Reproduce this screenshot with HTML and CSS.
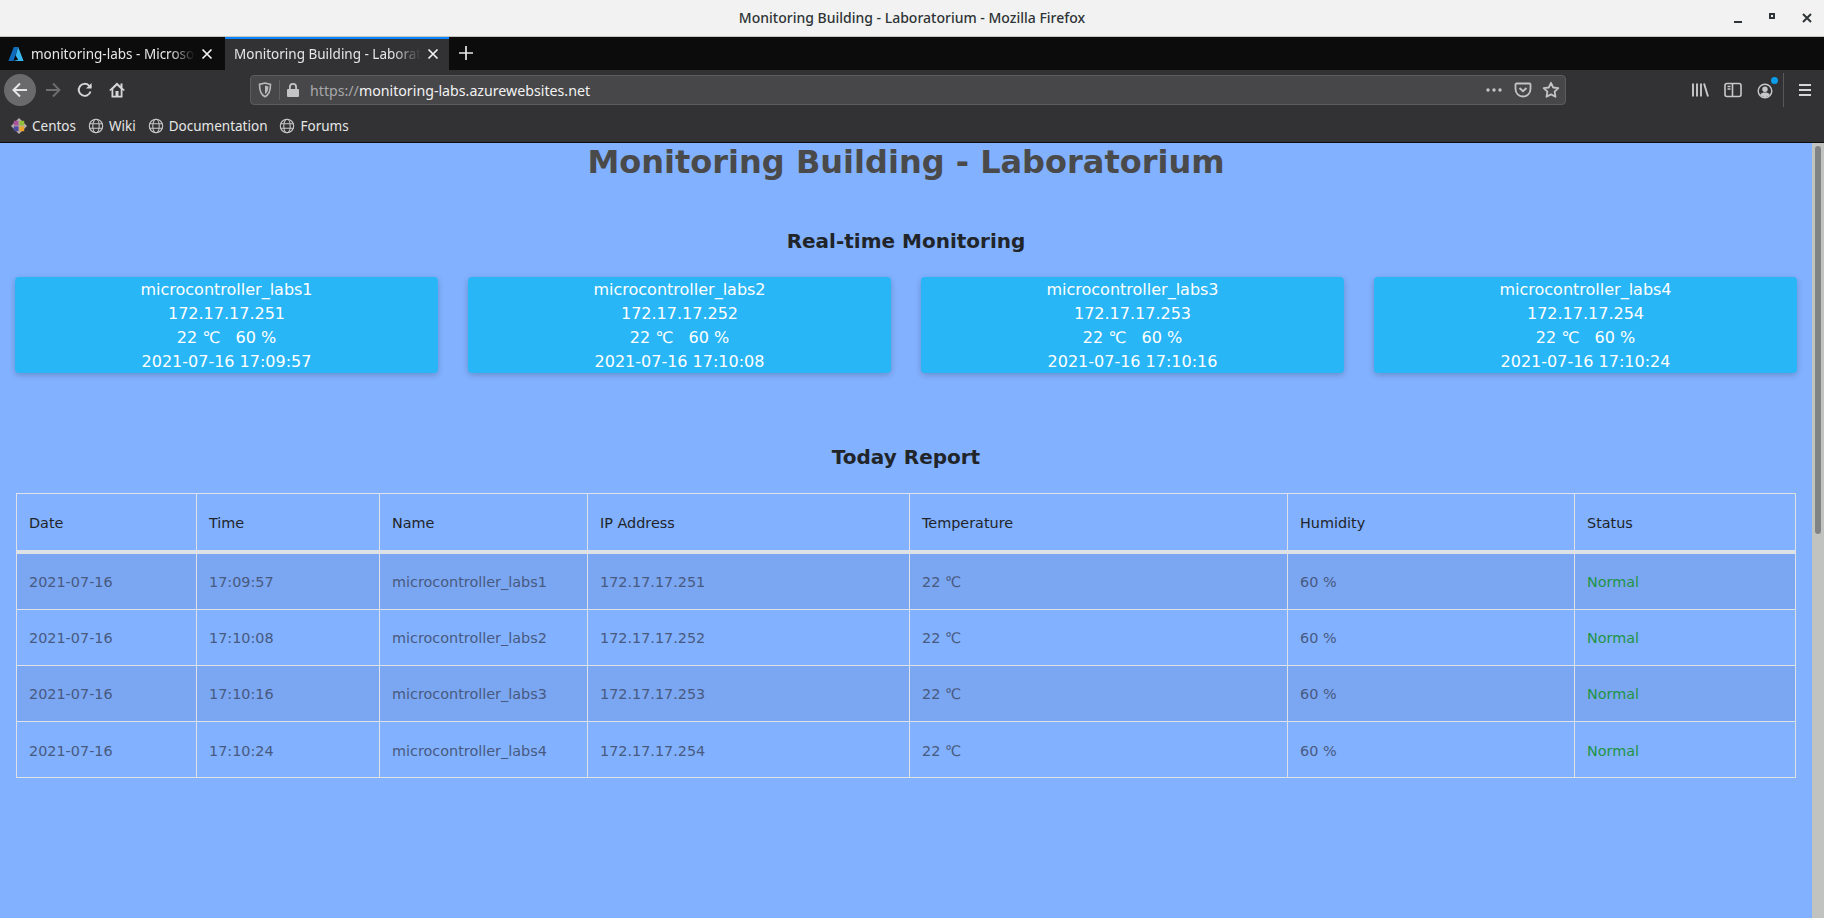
FILE: index.html
```html
<!DOCTYPE html>
<html lang="en">
<head>
  <meta charset="UTF-8">
  <title>Monitoring Building - Laboratorium</title>
  <link rel="stylesheet" href="styles.css">
</head>
<body>
<!-- Window title -->
<div class="titlebar">
  <div class="titlebar-text">Monitoring Building - Laboratorium - Mozilla Firefox</div>
  <div class="window-controls">
    <svg width="14" height="14" viewBox="0 0 14 14"><rect x="2" y="10" width="8" height="2" fill="#2e3436"/></svg>
    <svg width="14" height="14" viewBox="0 0 14 14"><path d="M3 2h6v6H3zM5 4v2h2V4z" fill="#2e3436" fill-rule="evenodd"/></svg>
    <svg width="14" height="14" viewBox="0 0 14 14"><path d="M3 3l8 8M11 3l-8 8" stroke="#2e3436" stroke-width="2" fill="none"/></svg>
  </div>
</div>

<!-- Tabs -->
<div class="tabstrip">
  <div class="tab">
    <svg class="tab-icon" width="16" height="16" viewBox="0 0 16 16">
      <path d="M5.800 1h4.400L5.400 15H0.400z" fill="#0f6cbd"/>
      <path d="M10.200 1l5.400 14H5.200l5-1.200L7.600 9.600 9 5z" fill="#38b6f0"/>
    </svg>
    <span class="tab-label">monitoring-labs - Microso</span>
    <svg class="tab-close" width="12" height="12" viewBox="0 0 12 12"><path d="M1.500 1.500l9 9M10.500 1.500l-9 9" stroke="#f2f2f2" stroke-width="1.700"/></svg>
  </div>
  <div class="tab tab-active">
    <span class="tab-label">Monitoring Building - Laborat</span>
    <svg class="tab-close" width="12" height="12" viewBox="0 0 12 12"><path d="M1.500 1.500l9 9M10.500 1.500l-9 9" stroke="#f2f2f2" stroke-width="1.700"/></svg>
  </div>
  <svg class="new-tab" width="14" height="14" viewBox="0 0 14 14"><path d="M7 0v14M0 7h14" stroke="#e8e8e8" stroke-width="1.700"/></svg>
</div>

<!-- Navigation -->
<div class="toolbar">
  <div class="nav-back">
    <svg width="18" height="18" viewBox="0 0 18 18"><path d="M16 9H2.500M9 2.500L2.500 9 9 15.500" stroke="#e6e6e6" stroke-width="2" fill="none"/></svg>
  </div>
  <svg class="nav-forward" width="18" height="18" viewBox="0 0 18 18"><path d="M2 9h13.500M9 2.500L15.500 9 9 15.500" stroke="#6f6f71" stroke-width="1.800" fill="none"/></svg>
  <svg class="nav-reload" width="16" height="16" viewBox="0 0 16 16"><path d="M13.500 9.500A6 6 0 1 1 12 3.600L14 5.500" stroke="#d6d6d6" stroke-width="1.900" fill="none"/><path d="M14.600 1v5.600H9z" fill="#d6d6d6"/></svg>
  <svg class="nav-home" width="18" height="18" viewBox="0 0 18 18"><path d="M9 1.500L1.200 9l1 1.100L3.500 9v7.500h11V9l1.300 1.100 1-1.100-2.300-2.200V2.500h-2v2.400zM5.300 8L9 4.400 12.700 8v6.800h-2.200V10h-3v4.800H5.300z" fill="#d6d6d6" fill-rule="evenodd"/></svg>
  <div class="urlbar">
    <svg class="url-shield" width="14" height="16" viewBox="0 0 14 16"><path d="M1.500 2.400L7 1l5.500 1.400c0 6-1 10-5.500 12.300C2.500 12.400 1.500 8.400 1.500 2.400z" stroke="#b8b8ba" stroke-width="1.600" fill="none"/><path d="M7 3.500l3.400.9c0 3.500-.8 6-3.400 7.800z" fill="#b8b8ba"/></svg>
    <div class="url-sep"></div>
    <svg class="url-lock" width="14" height="16" viewBox="0 0 14 16"><path d="M2 7h1V5a4 4 0 0 1 8 0v2h1a1 1 0 0 1 1 1v6a1 1 0 0 1-1 1H2a1 1 0 0 1-1-1V8a1 1 0 0 1 1-1zM4.800 7h4.400V5a2.200 2.200 0 0 0-4.400 0z" fill="#c4c4c6" fill-rule="evenodd"/></svg>
    <div class="url-text"><span class="url-scheme">https://</span>monitoring-labs.azurewebsites.net</div>
    <svg class="url-more" width="16" height="4" viewBox="0 0 16 4"><circle cx="2" cy="2" r="1.700" fill="#c4c4c6"/><circle cx="8" cy="2" r="1.700" fill="#c4c4c6"/><circle cx="14" cy="2" r="1.700" fill="#c4c4c6"/></svg>
    <svg class="url-pocket" width="18" height="16" viewBox="0 0 18 16"><path d="M2.500 1.500h13a1 1 0 0 1 1 1V7a7.500 7.500 0 0 1-15 0V2.500a1 1 0 0 1 1-1z" stroke="#c4c4c6" stroke-width="1.800" fill="none"/><path d="M5.500 6L9 9.300 12.500 6" stroke="#c4c4c6" stroke-width="1.900" fill="none"/></svg>
    <svg class="url-star" width="18" height="18" viewBox="0 0 18 18"><path d="M9 1.800l2.200 4.700 5.100.7-3.700 3.500.9 5.100L9 13.400l-4.500 2.400.9-5.100-3.700-3.500 5.100-.7z" stroke="#c4c4c6" stroke-width="1.800" stroke-linejoin="round" fill="none"/></svg>
  </div>
  <div class="toolbar-right">
    <svg class="tool-icon" width="18" height="16" viewBox="0 0 18 16"><path d="M2 1.500v13M6 1.500v13M10 1.500v13M13 1.500l4 13" stroke="#c8c8ca" stroke-width="1.900" fill="none"/></svg>
    <svg class="tool-icon" width="18" height="16" viewBox="0 0 18 16"><rect x="1" y="1.500" width="16" height="13" rx="2" stroke="#c8c8ca" stroke-width="1.600" fill="none"/><path d="M8.500 1.500v13" stroke="#c8c8ca" stroke-width="1.600"/><path d="M3.500 4.500h3M3.500 7h3" stroke="#c8c8ca" stroke-width="1.300"/></svg>
    <div class="tool-account">
      <svg width="16" height="16" viewBox="0 0 16 16"><circle cx="8" cy="8" r="6.800" stroke="#c8c8ca" stroke-width="1.400" fill="none"/><circle cx="8" cy="6.300" r="2.700" fill="#c8c8ca"/><path d="M3 12.200c1-2.200 2.800-2.700 5-2.700s4 .5 5 2.700L8 14.500z" fill="#c8c8ca"/></svg>
      <div class="account-dot"></div>
    </div>
    <div class="tool-sep"></div>
    <svg class="tool-menu" width="14" height="14" viewBox="0 0 14 14"><path d="M1 2h12M1 7h12M1 12h12" stroke="#d6d6d6" stroke-width="1.800"/></svg>
  </div>
</div>

<!-- Bookmarks -->
<div class="bookmarks">
  <div class="bookmark">
    <svg class="bookmark-icon" width="16" height="16" viewBox="0 0 16 16">
      <path d="M8 0l8 8-8 8-8-8z" fill="#b8aeb0"/>
      <rect x="2.800" y="2.800" width="4.800" height="4.800" fill="#a8559a"/>
      <rect x="8.400" y="2.800" width="4.800" height="4.800" fill="#93bf3a"/>
      <rect x="8.400" y="8.400" width="4.800" height="4.800" fill="#e9a52c"/>
      <rect x="2.800" y="8.400" width="4.800" height="4.800" fill="#4b4a9c"/>
    </svg>
    <span>Centos</span>
  </div>
  <div class="bookmark">
    <svg class="bookmark-icon" width="16" height="16" viewBox="0 0 16 16"><use href="#globe"/></svg>
    <span>Wiki</span>
  </div>
  <div class="bookmark">
    <svg class="bookmark-icon" width="16" height="16" viewBox="0 0 16 16"><use href="#globe"/></svg>
    <span>Documentation</span>
  </div>
  <div class="bookmark">
    <svg class="bookmark-icon" width="16" height="16" viewBox="0 0 16 16"><use href="#globe"/></svg>
    <span>Forums</span>
  </div>
</div>
<svg class="svg-defs" width="0" height="0">
  <symbol id="globe" viewBox="0 0 16 16">
    <g stroke="#c8c8ca" stroke-width="1.100" fill="none">
      <circle cx="8" cy="8" r="6.700"/>
      <ellipse cx="8" cy="8" rx="3.200" ry="6.700"/>
      <path d="M1.500 5.700h13M1.500 10.300h13"/>
    </g>
  </symbol>
</svg>

<!-- Page -->
<div class="viewport">
  <div class="page">
    <h1 class="page-title">Monitoring Building - Laboratorium</h1>

    <h3 class="section-title realtime-title">Real-time Monitoring</h3>
    <div class="card-row">
      <div class="card">
        <div>microcontroller_labs1</div>
        <div>172.17.17.251</div>
        <div>22 ℃ &nbsp; 60 %</div>
        <div>2021-07-16 17:09:57</div>
      </div>
      <div class="card">
        <div>microcontroller_labs2</div>
        <div>172.17.17.252</div>
        <div>22 ℃ &nbsp; 60 %</div>
        <div>2021-07-16 17:10:08</div>
      </div>
      <div class="card">
        <div>microcontroller_labs3</div>
        <div>172.17.17.253</div>
        <div>22 ℃ &nbsp; 60 %</div>
        <div>2021-07-16 17:10:16</div>
      </div>
      <div class="card">
        <div>microcontroller_labs4</div>
        <div>172.17.17.254</div>
        <div>22 ℃ &nbsp; 60 %</div>
        <div>2021-07-16 17:10:24</div>
      </div>
    </div>

    <h3 class="section-title report-title">Today Report</h3>
    <table class="report">
      <colgroup>
        <col class="col-date"><col class="col-time"><col class="col-name"><col class="col-ip">
        <col class="col-temp"><col class="col-hum"><col class="col-status">
      </colgroup>
      <thead>
        <tr><th>Date</th><th>Time</th><th>Name</th><th>IP Address</th><th>Temperature</th><th>Humidity</th><th>Status</th></tr>
      </thead>
      <tbody>
        <tr><td>2021-07-16</td><td>17:09:57</td><td>microcontroller_labs1</td><td>172.17.17.251</td><td>22 ℃</td><td>60 %</td><td class="status-ok">Normal</td></tr>
        <tr><td>2021-07-16</td><td>17:10:08</td><td>microcontroller_labs2</td><td>172.17.17.252</td><td>22 ℃</td><td>60 %</td><td class="status-ok">Normal</td></tr>
        <tr><td>2021-07-16</td><td>17:10:16</td><td>microcontroller_labs3</td><td>172.17.17.253</td><td>22 ℃</td><td>60 %</td><td class="status-ok">Normal</td></tr>
        <tr><td>2021-07-16</td><td>17:10:24</td><td>microcontroller_labs4</td><td>172.17.17.254</td><td>22 ℃</td><td>60 %</td><td class="status-ok">Normal</td></tr>
      </tbody>
    </table>
  </div>
  <div class="scrollbar"><div class="scrollbar-thumb"></div></div>
</div>
</body>
</html>
```

FILE: styles.css
```css
* {
  box-sizing: border-box;
}

html, body {
  height: 100%;
}

body {
  margin: 0;
  display: flex;
  flex-direction: column;
  overflow: hidden;
  font-family: "Noto Sans", sans-serif;
  background: #82b1ff;
}

/* Window title */
.titlebar {
  height: 37px;
  flex-shrink: 0;
  display: flex;
  align-items: center;
  justify-content: center;
  padding-bottom: 2px;
  background: #f2f2f2;
  border-bottom: 1px solid #c6c6c0;
  position: relative;
}

.titlebar-text {
  font-size: 14px;
  font-weight: 500;
  color: #2e3436;
}

.window-controls {
  position: absolute;
  right: 10px;
  top: 11px;
  display: flex;
  gap: 20px;
}

/* Tabs */
.tabstrip {
  height: 33px;
  flex-shrink: 0;
  display: flex;
  align-items: stretch;
  background: #0c0c0d;
  color: #e6e6e6;
  font-size: 13.5px;
}

.tab {
  width: 225px;
  display: flex;
  align-items: center;
  padding: 0 12px 2px 8px;
  border-top: 2px solid transparent;
}

.tab-active {
  width: 224px;
  background: #323234;
  border-top: 2px solid #0a84ff;
  padding-left: 9px;
}

.tab-icon {
  flex-shrink: 0;
  margin-right: 7px;
}

.tab-label {
  flex: 1;
  white-space: nowrap;
  -webkit-mask-image: linear-gradient(to right, #000 85%, transparent 100%);
  mask-image: linear-gradient(to right, #000 85%, transparent 100%);
}

.tab-close {
  flex-shrink: 0;
  margin-left: 6px;
}

.new-tab {
  align-self: center;
  margin: 0 0 2px 10px;
}

/* Navigation */
.toolbar {
  height: 42px;
  flex-shrink: 0;
  display: flex;
  align-items: center;
  background: #323234;
  padding: 0 0 2px 4px;
}

.nav-back {
  width: 32px;
  height: 32px;
  border-radius: 50%;
  background: #6a6a6c;
  display: flex;
  align-items: center;
  justify-content: center;
}

.nav-forward {
  margin-left: 8px;
}

.nav-reload {
  margin-left: 15px;
}

.nav-home {
  margin-left: 15px;
}

.urlbar {
  width: 1316px;
  height: 30px;
  margin-left: 124px;
  display: flex;
  align-items: center;
  background: #474749;
  border: 1px solid #5c5c5e;
  border-radius: 4px;
}

.url-shield {
  margin-left: 7px;
}

.url-sep {
  width: 1px;
  height: 20px;
  margin-left: 7px;
  background: #5f5f61;
}

.url-lock {
  margin-left: 6px;
}

.url-text {
  flex: 1;
  margin-left: 10px;
  font-size: 14.2px;
  color: #f2f2f2;
}

.url-scheme {
  color: #a8a8aa;
}

.url-more {
  margin-right: 12px;
}

.url-pocket {
  margin-right: 10px;
}

.url-star {
  margin-right: 5px;
}

.toolbar-right {
  flex: 1;
  display: flex;
  align-items: center;
  padding-left: 125px;
}

.tool-icon {
  margin-right: 15px;
}

.tool-account {
  position: relative;
  width: 16px;
  height: 16px;
}

.account-dot {
  position: absolute;
  top: -5px;
  right: -5px;
  width: 7px;
  height: 7px;
  border-radius: 50%;
  background: #0a9eea;
}

.tool-sep {
  width: 1px;
  height: 34px;
  margin-left: 10px;
  background: #58585a;
}

.tool-menu {
  margin-left: 14px;
}

/* Bookmarks */
.bookmarks {
  height: 31px;
  flex-shrink: 0;
  display: flex;
  align-items: center;
  padding: 0 0 3px 11px;
  background: #323234;
  border-bottom: 1px solid #0c0c0d;
  color: #e6e6e6;
  font-size: 13.5px;
  gap: 12px;
}

.bookmark {
  display: flex;
  align-items: center;
  gap: 5px;
}

.svg-defs {
  position: absolute;
}

/* Page */
.viewport {
  flex: 1;
  min-height: 0;
  display: flex;
  background: #82b1ff;
}

.page {
  flex: 1;
  padding: 0 15px;
  font-family: "DejaVu Sans", sans-serif;
  color: #212529;
}

.page-title {
  margin: 0;
  text-align: center;
  font-size: 32px;
  line-height: 38px;
  font-weight: 700;
  color: #4a4a4a;
}

.section-title {
  margin: 0;
  text-align: center;
  font-size: 20px;
  line-height: 24px;
  font-weight: 700;
}

.realtime-title {
  margin-top: 48px;
}

.card-row {
  display: grid;
  grid-template-columns: repeat(4, 1fr);
  gap: 30px;
  margin-top: 24px;
}

.card {
  height: 96px;
  padding-top: 1px;
  text-align: center;
  font-size: 16px;
  line-height: 24px;
  color: #fff;
  background: #29b6f6;
  border-radius: 4px;
  box-shadow: 0 2px 6px rgba(0, 0, 0, 0.2);
}

.report-title {
  margin-top: 72px;
}

.report {
  width: 1779px;
  margin: 24px 0 0 1px;
  table-layout: fixed;
  border-collapse: collapse;
  font-size: 14.4px;
}

.col-date { width: 180px; }
.col-time { width: 183px; }
.col-name { width: 208px; }
.col-ip { width: 322px; }
.col-temp { width: 378px; }
.col-hum { width: 287px; }
.col-status { width: 221px; }

.report th,
.report td {
  height: 56px;
  padding: 0 12px;
  text-align: left;
  vertical-align: middle;
  font-weight: 400;
  border: 1px solid #dee2e6;
}

.report th {
  height: 58px;
  padding-top: 2px;
  border-bottom: 4px solid #dee2e6;
  color: #212529;
}

.report td {
  color: #485a80;
}

.report tbody tr:first-child td {
  height: 58px;
  padding-top: 1px;
}

.report tbody tr:last-child td {
  padding-top: 2px;
}

.report tbody tr:nth-child(odd) {
  background: #7ba6f2;
}

.report td.status-ok {
  color: #1f9445;
}

.scrollbar {
  width: 12px;
  flex-shrink: 0;
  padding: 3px 3px 0;
  background: #c1c3c1;
}

.scrollbar-thumb {
  height: 388px;
  border-radius: 3px;
  background: #7f8384;
}
```
